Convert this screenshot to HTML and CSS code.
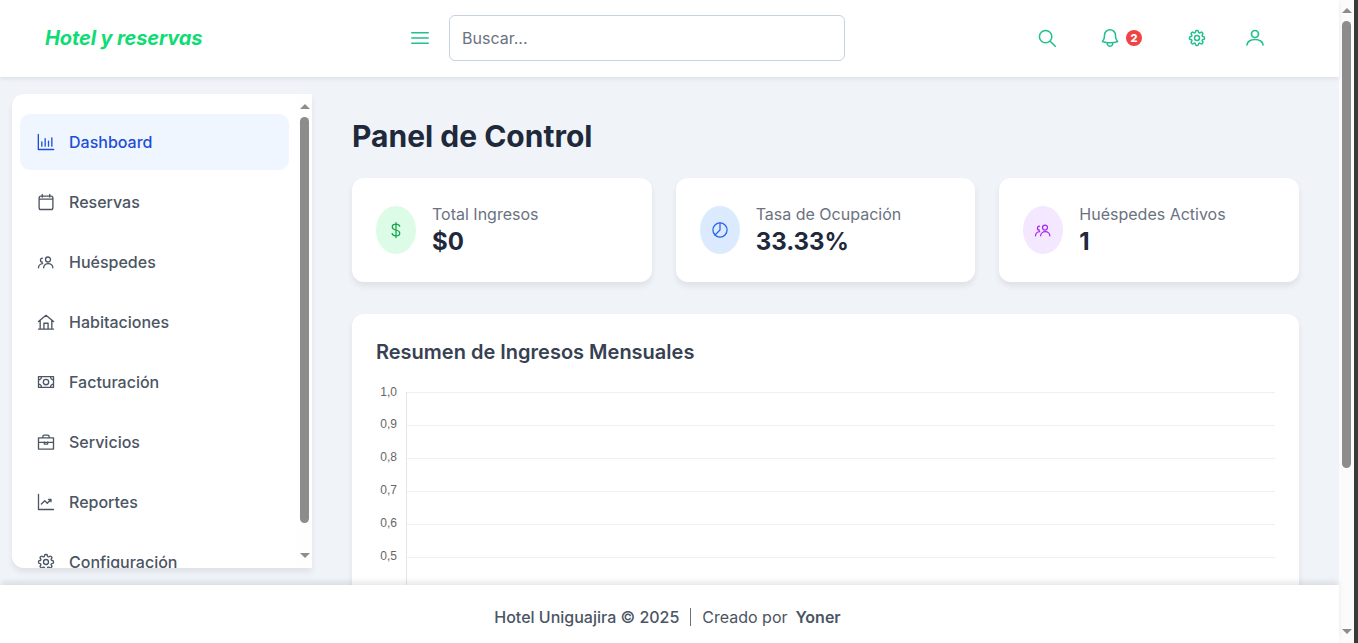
FILE: index.html
```html
<!DOCTYPE html>
<html lang="es">
  <head>
    <meta charset="utf-8">
    <title>Hotel y reservas</title>
    <link rel="stylesheet" href="styles.css">
  </head>
  <body>
    <div class="window">
      <div class="page">
        <header class="topbar">
          <div class="brand">Hotel y reservas</div>
          <div class="searchArea">
            <svg class="icon menuIcon" viewBox="0 0 24 24"><path d="M3.75 6.75h16.5M3.75 12h16.5M3.75 17.25h16.5"/></svg>
            <input class="searchInput" placeholder="Buscar...">
          </div>
          <div class="topActions">
            <svg class="icon actionSearch" viewBox="0 0 24 24"><path d="M21 21l-5.2-5.2M17.25 10.5a6.75 6.75 0 1 1-13.5 0 6.75 6.75 0 0 1 13.5 0z"/></svg>
            <div class="bell">
              <svg class="icon bellIcon" viewBox="0 0 24 24"><path d="M14.86 17.08a24 24 0 0 0 5.45-1.31A8.97 8.97 0 0 1 18 9.75V9a6 6 0 0 0-12 0v.75a8.97 8.97 0 0 1-2.31 6.02c1.73.64 3.56 1.09 5.45 1.31m5.72 0a24.25 24.25 0 0 1-5.72 0m5.72 0a3 3 0 1 1-5.72 0"/></svg>
              <span class="badge">2</span>
            </div>
            <svg class="icon actionGear" viewBox="0 0 24 24"><use href="#gear"/></svg>
            <svg class="icon actionUser" viewBox="0 0 24 24"><circle cx="12" cy="8" r="3.5"/><path d="M4 18.8c0-3.2 3.6-5.3 8-5.300s8 2.100 8 5.300"/></svg>
          </div>
        </header>

        <div class="body">
          <aside class="sidebar">
            <nav class="navList">
              <a class="navItem navActive"><svg class="icon" viewBox="0 0 24 24"><path d="M2.800 3v18h18.400M7 17v-5M11 17V8M15 17v-6M19 17V7"/></svg>Dashboard</a>
              <a class="navItem"><svg class="icon" viewBox="0 0 24 24"><path d="M7.500 3v3M16.500 3v3M3.750 8.500h16.500M6 5h12a2.250 2.250 0 0 1 2.250 2.250v11.500A2.250 2.250 0 0 1 18 21H6a2.250 2.250 0 0 1-2.250-2.250V7.250A2.250 2.250 0 0 1 6 5z"/></svg>Reservas</a>
              <a class="navItem"><svg class="icon" viewBox="0 0 24 24"><use href="#people"/></svg>Huéspedes</a>
              <a class="navItem"><svg class="icon" viewBox="0 0 24 24"><path d="M3 11.500L12 4l9 7.500M5 10v10.500h14V10M9.500 20.500V13.500h5v7M3 20.500h18"/></svg>Habitaciones</a>
              <a class="navItem"><svg class="icon" viewBox="0 0 24 24"><path d="M3 5.500h18v13H3zM3 9.500a3.500 3.500 0 0 0 3.500-4M21 9.500a3.500 3.500 0 0 1-3.500-4M3 14.500a3.500 3.500 0 0 1 3.500 4M21 14.500a3.500 3.500 0 0 0-3.500 4"/><circle cx="12" cy="12" r="3.250"/></svg>Facturación</a>
              <a class="navItem"><svg class="icon" viewBox="0 0 24 24"><path d="M8.250 7V5.250a1.500 1.500 0 0 1 1.500-1.500h4.500a1.500 1.500 0 0 1 1.500 1.500V7M3 7h18v13.500H3zM3 12.500h18M10 12v2.500h4V12"/></svg>Servicios</a>
              <a class="navItem"><svg class="icon" viewBox="0 0 24 24"><path d="M3 3v18h18M6.500 14.500l4-4 3 3 4.500-4.500M15.250 9H18v2.750"/></svg>Reportes</a>
              <a class="navItem"><svg class="icon" viewBox="0 0 24 24"><use href="#gear"/></svg>Configuración</a>
            </nav>
            <div class="miniScroll sideScroll">
              <span class="arrowUp"></span>
              <span class="thumb sideThumb"></span>
              <span class="arrowDown"></span>
            </div>
          </aside>

          <main class="content">
            <h1 class="pageTitle">Panel de Control</h1>
            <section class="statRow">
              <div class="statCard">
                <div class="statIcon iconGreen"><svg class="icon" viewBox="0 0 24 24"><path d="M12 3v18M16.500 7.500C16 5.800 14.300 5 12 5 9.300 5 7.500 6.300 7.500 8.300c0 2 1.800 3 4.500 3.700 2.800.7 4.500 1.700 4.500 3.800 0 2-1.900 3.200-4.500 3.200-2.500 0-4.200-1-4.700-2.800"/></svg></div>
                <div><p class="statLabel">Total Ingresos</p><p class="statValue">$0</p></div>
              </div>
              <div class="statCard">
                <div class="statIcon iconBlue"><svg class="icon" viewBox="0 0 24 24"><circle cx="12" cy="12" r="8.500"/><path d="M12 3.500V12l-6 6"/></svg></div>
                <div><p class="statLabel">Tasa de Ocupación</p><p class="statValue">33.33%</p></div>
              </div>
              <div class="statCard">
                <div class="statIcon iconPurple"><svg class="icon" viewBox="0 0 24 24"><use href="#people"/></svg></div>
                <div><p class="statLabel">Huéspedes Activos</p><p class="statValue">1</p></div>
              </div>
            </section>

            <section class="chartCard">
              <h2 class="chartTitle">Resumen de Ingresos Mensuales</h2>
              <div class="chart">
                <div class="chartRow"><span class="tick">1,0</span><span class="gridLine"></span></div>
                <div class="chartRow"><span class="tick">0,9</span><span class="gridLine"></span></div>
                <div class="chartRow"><span class="tick">0,8</span><span class="gridLine"></span></div>
                <div class="chartRow"><span class="tick">0,7</span><span class="gridLine"></span></div>
                <div class="chartRow"><span class="tick">0,6</span><span class="gridLine"></span></div>
                <div class="chartRow"><span class="tick">0,5</span><span class="gridLine"></span></div>
              </div>
            </section>
          </main>
        </div>

        <footer class="footer">
          <span class="footerHotel">Hotel Uniguajira © 2025</span>
          <span class="footerBar"></span>
          <span>Creado por</span>
          <strong class="footerName">Yoner</strong>
        </footer>
      </div>

      <div class="miniScroll pageScroll">
        <span class="arrowUp"></span>
        <span class="thumb pageThumb"></span>
        <span class="arrowDown"></span>
      </div>
      <div class="windowEdge"></div>
    </div>

    <svg class="iconDefs" width="0" height="0">
      <defs>
        <g id="people">
          <path d="M17.400 9a3 3 0 1 1-6 0 3 3 0 0 1 6 0zM9.200 19a5.200 4.800 0 0 1 11 0M7.800 7.400a2.400 2.400 0 0 0 0 4.800M3 19c0-2.600 2.200-4.800 5-5"/>
        </g>
        <g id="gear">
          <path d="M10.340 3.940c.09-.54.56-.94 1.110-.94h1.090c.55 0 1.020.4 1.110.94l.15.89c.06.42.38.77.78.93.4.17.86.14 1.220-.07l.74-.53c.45-.32 1.060-.27 1.450.12l.77.77c.39.39.44 1 .12 1.450l-.53.74c-.25.35-.28.81-.12 1.210.17.4.51.7.94.78l.89.15c.54.09.94.56.94 1.110v1.090c0 .55-.4 1.020-.94 1.110l-.89.15c-.43.07-.77.38-.94.78-.16.4-.13.86.12 1.210l.53.74c.32.45.27 1.060-.12 1.450l-.77.77c-.39.39-1 .44-1.450.12l-.74-.53c-.35-.25-.81-.28-1.210-.12-.4.17-.71.51-.78.94l-.15.89c-.09.54-.56.94-1.110.94h-1.090c-.55 0-1.020-.4-1.110-.94l-.15-.89c-.07-.43-.38-.77-.78-.94-.4-.16-.86-.13-1.210.12l-.74.53c-.45.32-1.060.27-1.450-.12l-.77-.77c-.39-.39-.44-1-.12-1.450l.53-.74c.25-.35.28-.81.12-1.210-.17-.4-.51-.71-.94-.78l-.89-.15c-.54-.09-.94-.56-.94-1.110v-1.090c0-.55.4-1.020.94-1.110l.89-.15c.43-.07.77-.38.94-.78.16-.4.13-.86-.12-1.210l-.53-.74c-.32-.45-.27-1.060.12-1.450l.77-.77c.39-.39 1-.44 1.450-.12l.74.53c.35.25.81.28 1.210.12.4-.17.71-.51.78-.94z"/>
          <circle cx="12" cy="12" r="3"/>
        </g>
      </defs>
    </svg>
  </body>
</html>
```

FILE: styles.css
```css
* { box-sizing: border-box; }
html, body { height: 100%; }
body { margin: 0; overflow: hidden; font-family: Inter, "Liberation Sans", sans-serif; color: #1f2937; }

.iconDefs { position: absolute; }
.icon { width: 20px; height: 20px; fill: none; stroke: currentColor; stroke-width: 1.5; stroke-linecap: round; stroke-linejoin: round; flex-shrink: 0; }

.window { display: flex; height: 643px; }
.page { flex: 1; min-width: 0; display: flex; flex-direction: column; background: #f0f4f9; }

/* top bar */
.topbar { height: 77px; padding-bottom: 1px; flex-shrink: 0; background: #fff; display: flex; align-items: center; box-shadow: 0 2px 4px rgba(0, 0, 0, 0.08); position: relative; z-index: 2; color: #22c08e; }
.brand { width: 408px; padding-left: 45px; font-size: 20px; font-weight: 700; font-style: italic; letter-spacing: -0.13px; color: #0fdc74; }
.searchArea { display: flex; align-items: center; gap: 17px; width: 437px; }
.menuIcon { width: 24px; height: 24px; }
.searchInput { width: 396px; height: 46px; border: 1px solid #c6d2e0; border-radius: 6px; padding: 0 12px; font: 16px Inter, sans-serif; color: #1f2937; outline: none; }
.searchInput::placeholder { color: #6b7280; opacity: 1; }
.topActions { margin-left: 191px; display: flex; align-items: center; }
.actionSearch { width: 22px; height: 22px; margin-right: 41px; stroke-width: 1.7; }
.bell { display: flex; align-items: center; gap: 5px; margin-right: 45px; }
.bellIcon { width: 22px; height: 22px; stroke-width: 1.7; }
.badge { width: 16px; height: 16px; border-radius: 50%; background: #ef4444; color: #fff; font-size: 11px; font-weight: 800; display: flex; align-items: center; justify-content: center; }
.actionGear { margin-right: 36px; stroke-width: 1.8; }
.actionUser { width: 24px; height: 24px; stroke-width: 1.7; }

/* layout under the bar */
.body { flex: 1; min-height: 0; display: flex; overflow: hidden; }

/* sidebar */
.sidebar { width: 300px; height: 474px; margin: 17px 0 0 12px; background: #fff; border-radius: 12px 0 0 12px; box-shadow: 0 4px 6px rgba(0, 0, 0, 0.08); position: relative; overflow: hidden; flex-shrink: 0; }
.navList { padding: 20px 8px 0; width: 285px; display: flex; flex-direction: column; gap: 4px; }
.navItem { height: 56px; display: flex; align-items: center; gap: 13px; padding: 0 16px; border-radius: 10px; font-size: 16px; font-weight: 470; color: #4b5563; }
.navItem .icon { stroke-width: 1.6; }
.navActive { background: #eff6ff; color: #1d4ed8; }

/* drawn scrollbars */
.miniScroll { background: #fbfbfb; display: flex; flex-direction: column; align-items: center; flex-shrink: 0; }
.arrowUp { width: 0; height: 0; border-left: 5px solid transparent; border-right: 5px solid transparent; border-bottom: 5px solid #8c8c8c; }
.arrowDown { width: 0; height: 0; border-left: 5px solid transparent; border-right: 5px solid transparent; border-top: 5px solid #8c8c8c; margin-top: auto; }
.thumb { background: #8c8c8c; border-radius: 5px; width: 9px; }

.sideScroll { position: absolute; top: 0; right: 0; bottom: 0; width: 15px; padding: 10px 0 10px; background: #fefefe; }
.sideThumb { height: 406px; margin-top: 8px; }
.pageScroll { width: 15px; padding: 8px 0 9px; }
.pageThumb { height: 447px; margin-top: 8px; }
.windowEdge { width: 4px; background: #3a3a3a; }

/* main column */
.content { flex: 1; min-width: 0; padding: 0 40px; overflow: hidden; }
.pageTitle { margin: 41px 0 24px; font-size: 30px; line-height: 36px; font-weight: 700; color: #1e293b; }
.statRow { display: grid; grid-template-columns: repeat(3, 1fr); gap: 24px; }
.statCard { height: 104px; background: #fff; border-radius: 12px; box-shadow: 0 4px 6px rgba(0, 0, 0, 0.08); display: flex; align-items: center; gap: 16px; padding: 0 24px; }
.statIcon { width: 40px; height: 48px; border-radius: 50%; display: flex; align-items: center; justify-content: center; }
.iconGreen { background: #dcfce7; color: #16a34a; }
.iconBlue { background: #dbeafe; color: #2563eb; }
.iconPurple { background: #f3e8ff; color: #a824f0; }
.statLabel { margin: 0; font-size: 16px; line-height: 24px; color: #6b7280; }
.statValue { margin: 0; font-size: 24px; line-height: 32px; font-weight: 700; color: #1e293b; }

/* chart */
.chartCard { margin-top: 32px; height: 300px; background: #fff; border-radius: 12px; box-shadow: 0 4px 6px rgba(0, 0, 0, 0.08); padding: 24px; }
.chartTitle { margin: 0 0 26px; font-size: 20px; line-height: 28px; font-weight: 600; color: #374151; }
.chart { display: flex; flex-direction: column; border-left: 1px solid #e5e5e5; margin-left: 30px; }
.chartRow { height: 33px; display: flex; align-items: flex-start; position: relative; }
.tick { position: absolute; left: -33px; top: -8px; width: 23px; text-align: right; font-family: "Liberation Sans", sans-serif; font-size: 12px; line-height: 14px; color: #666; }
.chartRow:first-child .tick { top: -7px; }
.gridLine { flex: 1; height: 1px; background: #f0f0f0; }

/* footer */
.footer { height: 58px; padding: 6px 4px 0 0; flex-shrink: 0; background: #fff; display: flex; align-items: center; justify-content: center; font-size: 16px; color: #4b5563; box-shadow: 0 -4px 6px -1px rgba(0, 0, 0, 0.1); position: relative; z-index: 2; }
.footerHotel { font-weight: 450; }
.footerBar { width: 1px; height: 18px; margin: 0 11px; background: #6b7280; }
.footerName { font-weight: 600; margin-left: 8px; }
```
